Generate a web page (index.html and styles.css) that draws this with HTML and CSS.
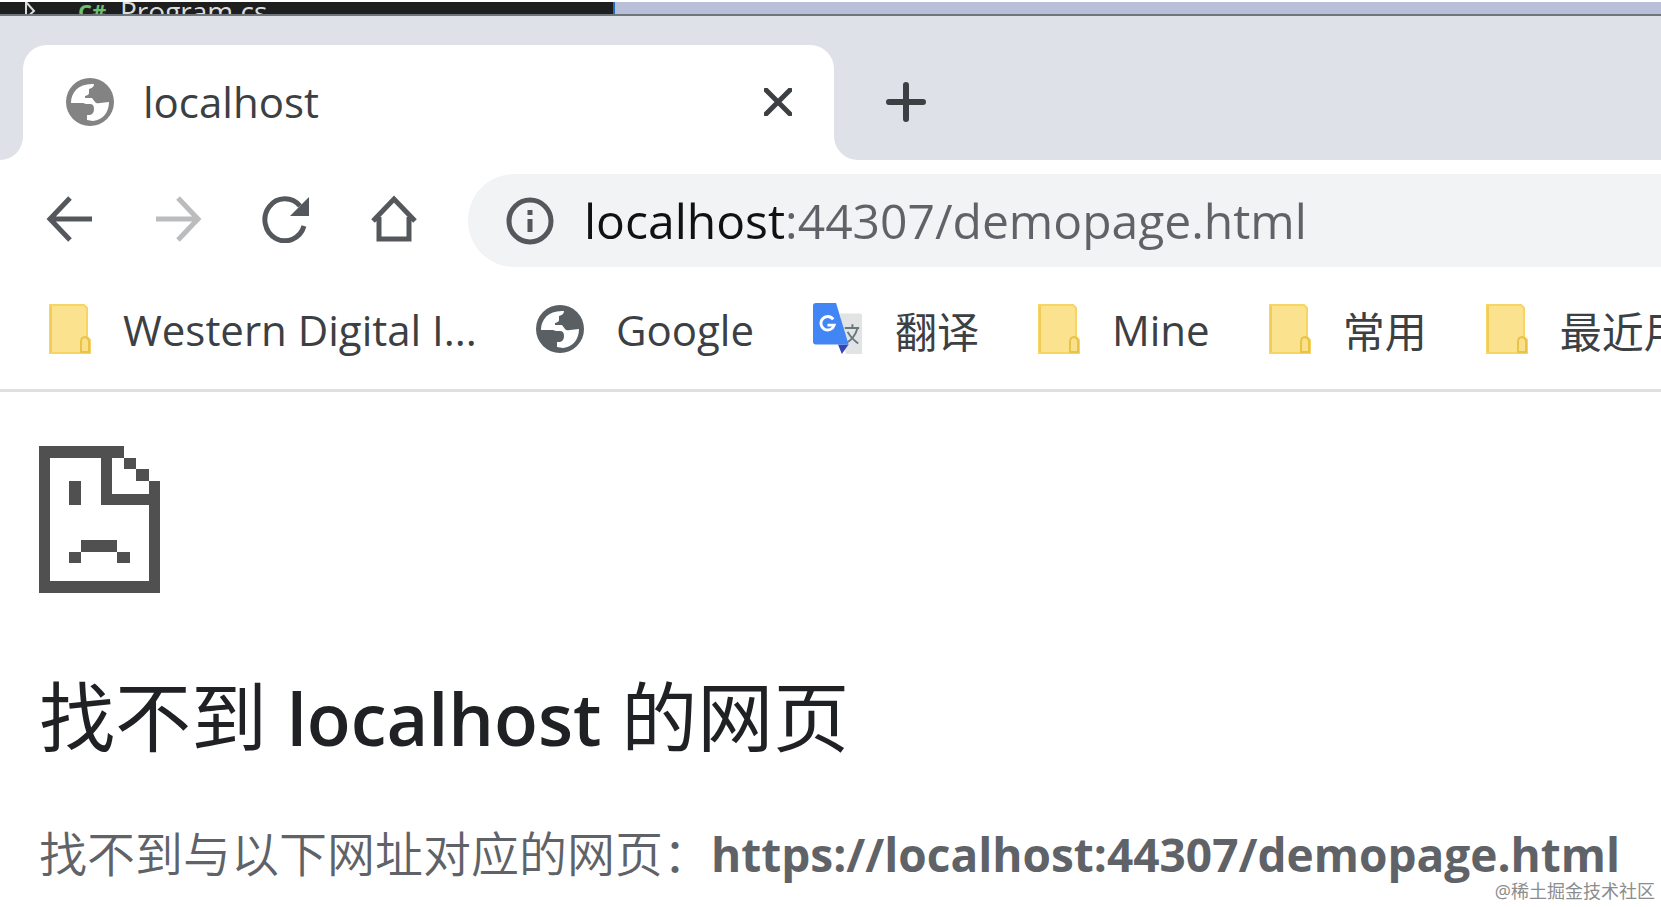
FILE: index.html
```
<!DOCTYPE html>
<html lang="zh-CN">
<head>
  <meta charset="UTF-8" />
  <title>localhost</title>
  <link rel="stylesheet" href="styles.css">
</head>
<body>
  <svg class="symbols" aria-hidden="true">
    <symbol id="globe" viewBox="0 0 48 48">
      <circle cx="24" cy="24" r="24" fill="currentColor" />
      <path fill="#fff" d="M5 25C5 14 13 5 28 6C28 9 26 10 23 11V15Q23 17 19 18V20H26L29 24Q30 26 34 25L43 24C43 34 37 42 27 43L21 42V37H24Q28 36 28 31Q28 26 24 26H20L17 25Z" />
    </symbol>
    <symbol id="folder" viewBox="0 0 42 50">
      <path d="M1 1H35L38 4V33L41 36V49H1Z" fill="#fbe28f" stroke="#f6d563" stroke-width="2" />
      <path d="M2 2V48" stroke="#efcc5c" stroke-width="2" />
      <path d="M32 48V38Q32 33 36 33Q40 34 40 38V48Z" fill="#fbe08a" stroke="#e9c348" stroke-width="2" />
    </symbol>
  </svg>

  <div class="editor">
    <div class="editor-tab">
      <svg class="caret" viewBox="0 0 12 18"><path d="M2 0V16L10 9Z" /></svg>
      <span class="lang">C#</span>
      <span>Program.cs</span>
    </div>
  </div>

  <header class="browser">
    <div class="tab-strip">
      <div class="edge"></div>
      <div class="tab">
        <svg class="globe light"><use href="#globe" /></svg>
        <span class="tab-title">localhost</span>
        <button class="close" aria-label="关闭">
          <svg viewBox="0 0 28 28"><path d="M2 2L26 26M26 2L2 26" /></svg>
        </button>
      </div>
      <div class="strip-rest">
        <button class="new-tab" aria-label="新标签页">
          <svg viewBox="0 0 40 40"><path d="M20 3V37M3 20H37" /></svg>
        </button>
      </div>
    </div>

    <div class="toolbar">
      <div class="nav">
        <button aria-label="后退">
          <svg viewBox="0 0 48 48"><path d="M46 24H6M24 3L4 24L24 45" /></svg>
        </button>
        <button class="disabled" aria-label="前进" disabled>
          <svg viewBox="0 0 48 48"><path d="M2 24H42M24 3L44 24L24 45" /></svg>
        </button>
        <button aria-label="重新加载">
          <svg viewBox="0 0 48 48"><path d="M42 31A20 21 0 1 1 38 11" /><path class="solid" d="M47 2V21H28Z" /></svg>
        </button>
        <button aria-label="主页">
          <svg viewBox="0 0 48 48"><path d="M3 26L24 4L45 26M9 22V44H39V22" /></svg>
        </button>
      </div>
      <label class="omnibox">
        <svg viewBox="0 0 48 48"><circle cx="24" cy="24" r="21" /><path d="M24 22V35M24 13V18" /></svg>
        <input type="text" aria-label="地址" value="localhost:44307/demopage.html">
      </label>
    </div>

    <nav class="bookmarks">
      <a href="#"><svg class="folder"><use href="#folder" /></svg>Western Digital I...</a>
      <a href="#"><svg class="globe"><use href="#globe" /></svg>Google</a>
      <a href="#">
        <svg class="translate" viewBox="0 0 52 54">
          <path d="M28 11H49Q51 11 51 13V53H34Z" fill="#e1e3e5" />
          <path d="M33 26H48M41 22V26M46 27Q43 37 34 42M36 30Q40 37 47 42" fill="none" stroke="#67787d" stroke-width="2" />
          <path d="M26 43H37L30 53Z" fill="#3544b5" />
          <path d="M3 0H24L37 43H3Q0 43 0 40V3Q0 0 3 0Z" fill="#4285f4" />
          <path d="M21 17A7 7 0 1 0 22 23H15" fill="none" stroke="#fff" stroke-width="3" />
        </svg>翻译</a>
      <a href="#"><svg class="folder"><use href="#folder" /></svg>Mine</a>
      <a href="#"><svg class="folder"><use href="#folder" /></svg>常用</a>
      <a href="#"><svg class="folder"><use href="#folder" /></svg>最近用</a>
    </nav>
  </header>

  <main class="error-page">
    <svg class="sad-page" viewBox="0 0 364 440" shape-rendering="crispEdges">
      <path fill-rule="evenodd" d="M0 0H257V34H221V142H330V104H364V440H0ZM33 34V405H330V176H187V34Z" />
      <path d="M257 34H293V69H257ZM293 69H330V104H293ZM90 104H127V176H90ZM127 283H236V317H127ZM90 317H127V352H90ZM236 317H273V352H236Z" />
    </svg>
    <h1>找不到 <span>localhost</span> 的网页</h1>
    <p>找不到与以下网址对应的网页：<strong>https://localhost:44307/demopage.html</strong></p>
  </main>

  <div class="watermark">@稀土掘金技术社区</div>
</body>
</html>
```

FILE: styles.css
```
* {
  box-sizing: border-box;
}
body {
  margin: 0;
  padding-top: 2px;
  min-height: 100vh;
  background: #fff;
  font-family: "Open Sans", "Noto Sans CJK SC", sans-serif;
  color: #3c4043;
  overflow: hidden;
  position: relative;
}
button {
  padding: 0;
  border: none;
  background: none;
  color: inherit;
  display: flex;
  cursor: pointer;
}
svg {
  display: block;
  flex: none;
}
.symbols {
  position: absolute;
  width: 0;
  height: 0;
}

/* strip of the editor window behind the browser */
.editor {
  height: 14px;
  display: flex;
  background: #b9bfd8;
  border-bottom: 2px solid #70757c;
  overflow: hidden;
}
.editor-tab {
  width: 37%;
  height: 12px;
  padding: 6px 0 0 24px;
  display: flex;
  align-items: center;
  background: #1e1e1e;
  border-right: 2px solid #1c6fc4;
  color: #dcdcdc;
  font-size: 28px;
  line-height: 28px;
}
.caret {
  width: 12px;
  height: 18px;
  fill: none;
  stroke: #dcdcdc;
  stroke-width: 2;
}
.lang {
  width: 42px;
  margin: 0 0 0 42px;
  color: #6cc070;
  font-size: 22px;
  font-weight: 700;
}

/* tabs */
.tab-strip {
  height: 144px;
  padding-top: 29px;
  display: flex;
  background: linear-gradient(#dee1e8 110px, #fff 110px);
}
.edge {
  width: 23px;
  background: #dee1e8;
  border-bottom-right-radius: 24px;
}
.tab {
  width: 811px;
  padding: 0 42px 2px 43px;
  display: flex;
  align-items: center;
  background: #fff;
  border-radius: 24px 24px 0 0;
}
.globe {
  width: 48px;
  height: 50px;
  color: #5a5f63;
}
.globe.light {
  color: #838383;
}
.tab-title {
  flex: 1;
  margin-left: 29px;
  font-size: 42px;
}
.close svg,
.new-tab svg {
  width: 28px;
  height: 28px;
  fill: none;
  stroke: #3c4043;
  stroke-width: 5;
  stroke-linecap: round;
}
.new-tab svg {
  width: 40px;
  height: 40px;
  stroke-width: 6;
}
.strip-rest {
  flex: 1;
  padding: 0 0 2px 52px;
  display: flex;
  align-items: center;
  background: #dee1e8;
  border-bottom-left-radius: 24px;
}

/* toolbar */
.toolbar {
  padding: 14px 0 0 46px;
  display: flex;
}
.nav {
  width: 422px;
  padding-bottom: 4px;
  display: flex;
  align-items: center;
  gap: 60px;
}
.nav svg,
.omnibox svg {
  width: 48px;
  height: 48px;
  fill: none;
  stroke: #54585c;
  stroke-width: 5;
}
.nav .disabled svg {
  stroke: #babcbe;
}
.nav .solid {
  fill: #54585c;
  stroke: none;
}
.omnibox {
  flex: 1;
  height: 93px;
  padding-left: 38px;
  display: flex;
  align-items: center;
  gap: 30px;
  background: #f1f3f4;
  border-radius: 46px 0 0 46px;
}
.omnibox input {
  flex: 1;
  min-width: 0;
  padding: 0;
  border: none;
  outline: none;
  font: 48px "Open Sans", sans-serif;
  color: transparent;
  /* host in black, the rest of the address in grey */
  background: linear-gradient(90deg, #111 203px, #5f6368 203px);
  -webkit-background-clip: text;
  background-clip: text;
}

/* bookmarks bar */
.bookmarks {
  height: 125px;
  padding: 2px 0 0 49px;
  display: flex;
  align-items: center;
  gap: 59px;
  border-bottom: 3px solid #dedfe0;
  overflow: hidden;
}
.bookmarks a {
  display: flex;
  align-items: center;
  gap: 32px;
  color: #3c4043;
  font-size: 42px;
  text-decoration: none;
  white-space: nowrap;
}
.folder {
  width: 42px;
  height: 50px;
}
.translate {
  width: 50px;
  height: 52px;
}

/* error page */
.error-page {
  padding: 54px 39px 0;
}
.sad-page {
  width: 121px;
  height: 147px;
  fill: #505050;
}
h1 {
  margin: 68px 0 0;
  color: #202124;
  font-size: 76px;
  line-height: 112px;
  font-weight: 400;
}
h1 span {
  font-size: 72px;
  font-weight: 600;
}
p {
  margin: 48px 0 0;
  color: #5f6368;
  font-size: 48px;
  line-height: 64px;
  font-weight: 350;
  white-space: nowrap;
}
strong {
  font-size: 46px;
  font-weight: 700;
}
.watermark {
  position: absolute;
  right: 6px;
  bottom: 4px;
  color: #8c8c8c;
  font-size: 18px;
  line-height: 24px;
}
```
